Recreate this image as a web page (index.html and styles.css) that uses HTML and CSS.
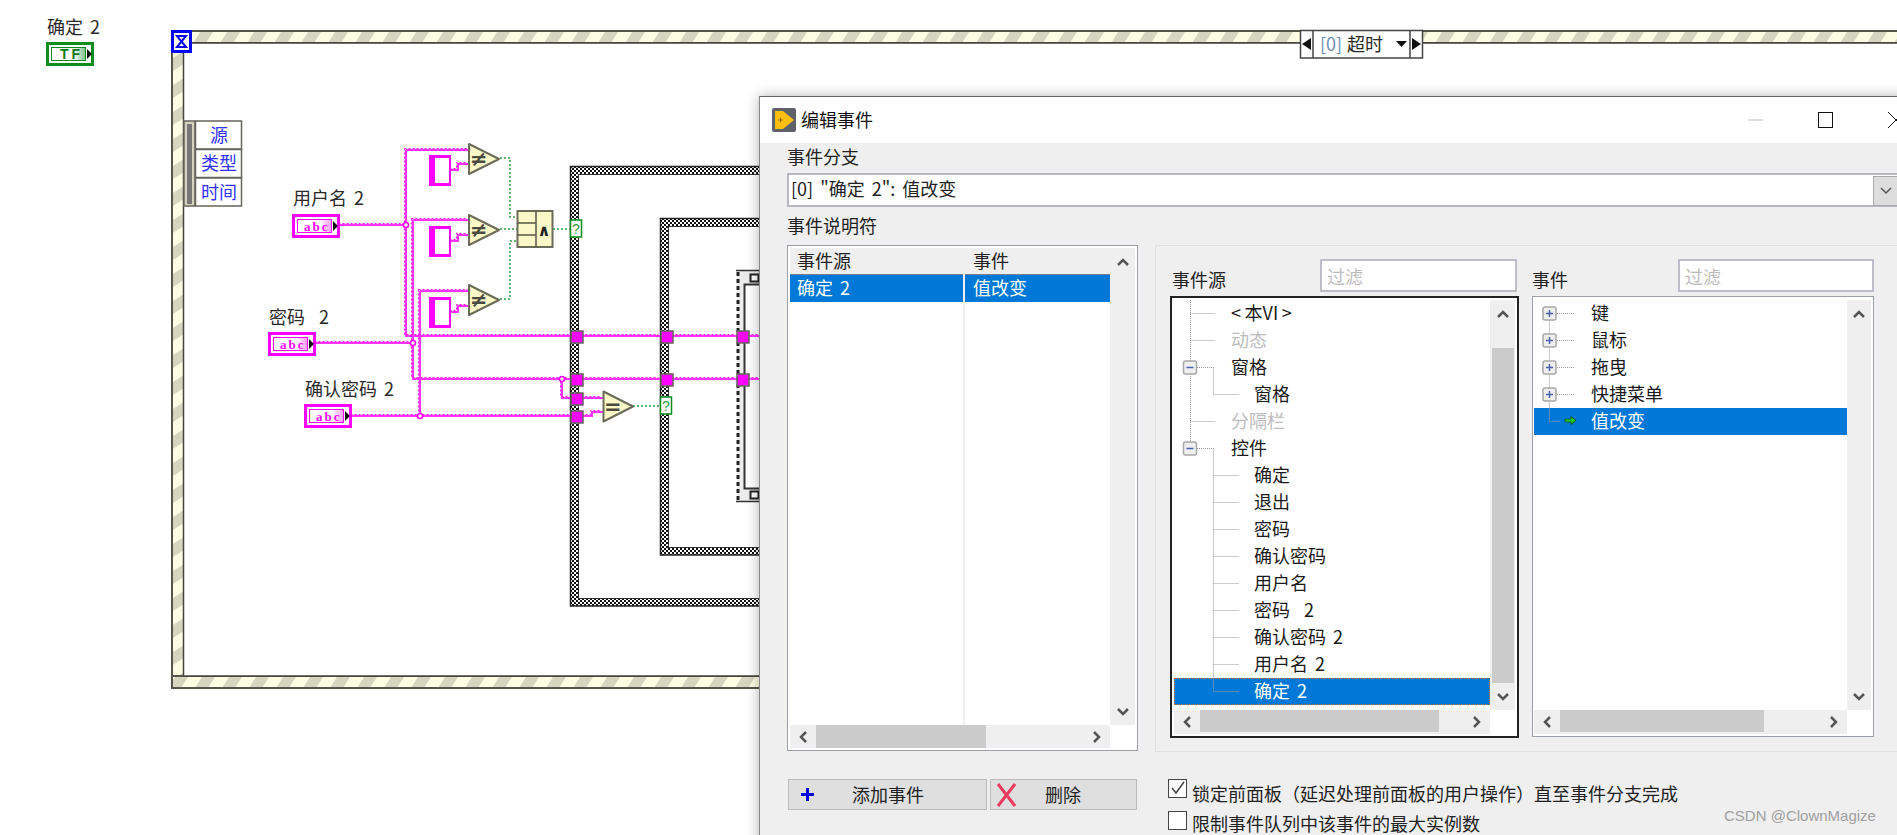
FILE: index.html
```html
<!DOCTYPE html>
<html lang="zh-CN">
<head>
<meta charset="utf-8">
<title>编辑事件</title>
<link rel="stylesheet" href="styles.css">
</head>
<body>
<div class="screen">
  <svg class="diagram" width="1897" height="835" viewBox="0 0 1897 835" xmlns="http://www.w3.org/2000/svg">
    <defs>
      <pattern id="stripeH" width="27" height="27" patternUnits="userSpaceOnUse" patternTransform="translate(4 0) skewX(-32)">
        <rect class="st-bg" width="27" height="27"/><rect class="st-fg" width="13" height="27"/>
      </pattern>
      <pattern id="stripeV" width="27" height="27" patternUnits="userSpaceOnUse" patternTransform="translate(0 4) skewY(-32)">
        <rect class="st-bg" width="27" height="27"/><rect class="st-fg" width="27" height="13"/>
      </pattern>
      <pattern id="checker" width="4" height="4" patternUnits="userSpaceOnUse">
        <rect class="ck-bg" width="4" height="4"/><rect class="ck-fg" width="2" height="2"/><rect class="ck-fg" x="2" y="2" width="2" height="2"/>
      </pattern>
      <linearGradient id="fadeP" x1="0" x2="1" y1="0" y2="0"><stop offset="0" stop-color="#fff"/><stop offset="1" stop-color="#ff9cff"/></linearGradient>
      <linearGradient id="fadeG" x1="0" x2="1" y1="0" y2="0"><stop offset="0" stop-color="#fff"/><stop offset="1" stop-color="#7fc08a"/></linearGradient>
      <g id="strc"><rect class="mag" width="22" height="31"/><rect class="wht" x="6" y="3" width="14" height="25"/></g>
      <g id="neq">
        <polygon class="prim" points="1,1 31,16 1,31"/>
        <text class="prim-sign" x="2" y="23">≠</text>
      </g>
      <g id="strterm">
        <rect class="mag" width="48" height="24"/>
        <rect class="wht" x="3" y="3" width="42" height="18"/>
        <rect class="term-line-p" x="5.5" y="5.5" width="34" height="13"/>
        <rect class="fade-p" x="28" y="6" width="11" height="12"/>
        <text class="term-abc" x="12" y="16.500">abc</text>
        <polygon class="blk" points="41,7 46,12 41,17"/>
      </g>
      <g id="wires">
        <path d="M340 225H406M406 150V336H570M406 150H469M413 220V379H570M413 220H469M316 343H413M420 291V416M420 291H469M352 416H570M562 379V398H570"/>
        <path d="M451 170H458V164H469M451 241H458V235H469M451 312H458V306H469"/>
        <path d="M583 336H660M673 336H737M749 336H770M583 379H660M673 379H737M749 379H770"/>
        <path d="M583 398H603M583 416H592V412H603"/>
      </g>
    </defs>

    <!-- 事件结构外框 -->
    <rect class="band" x="172" y="31" width="1740" height="12" fill="url(#stripeH)"/>
    <rect class="band" x="172" y="31" width="12" height="657" fill="url(#stripeV)"/>
    <rect class="band" x="172" y="676" width="1000" height="12" fill="url(#stripeH)"/>
    <rect class="frame-inner" x="183.500" y="43" width="1760" height="633"/>

    <rect class="icon-blue" x="172.5" y="31.5" width="18" height="20"/>
    <polygon class="icon-glass" points="177,36 186,36 181.5,41.5 186,47 177,47 181.5,41.5"/>

    <!-- 事件数据节点 -->
    <rect class="node-strip" x="184" y="121" width="11" height="85"/>
    <rect class="node-grip" x="187" y="124" width="5" height="80"/>
    <rect class="node-cell" x="195.5" y="121" width="46" height="28"/>
    <rect class="node-cell" x="195.5" y="149.5" width="46" height="28"/>
    <rect class="node-cell" x="195.5" y="178" width="46" height="28"/>
    <text class="node-text" x="219" y="141.5">源</text>
    <text class="node-text" x="219" y="170">类型</text>
    <text class="node-text" x="219" y="198.5">时间</text>

    <!-- 条件结构 -->
    <rect class="ck-outer" x="570.5" y="166.5" width="400" height="439.5" fill="url(#checker)"/>
    <rect class="ck-inner" x="578.5" y="174.5" width="400" height="424"/>
    <rect class="ck-outer" x="660.5" y="218.5" width="400" height="336.5" fill="url(#checker)"/>
    <rect class="ck-inner" x="668.5" y="226.5" width="400" height="321"/>
    <rect class="seq-fill" x="737" y="270" width="100" height="232"/>
    <path class="seq-edge" d="M736 270.500H800M736 501.500H800"/>
    <path class="seq-dash" d="M738 272V500"/>
    <rect class="seq-inner" x="744.5" y="284.5" width="100" height="204"/>
    <rect class="seq-sq" x="750.5" y="274.5" width="8" height="7"/>
    <rect class="seq-sq" x="750.5" y="491.5" width="8" height="7"/>

    <!-- 连线 -->
    <use href="#wires" class="wire-base"/>
    <use href="#wires" class="wire-top"/>
    <path class="bool" d="M500 158H510V217H517M500 229H517M500 299H510V241H517M553 229H570M633 406H660"/>
    <circle class="junction" cx="406" cy="225" r="2.5"/>
    <circle class="junction" cx="413" cy="343" r="2.5"/>
    <circle class="junction" cx="420" cy="416" r="2.5"/>
    <circle class="junction" cx="562" cy="379" r="2.5"/>

    <!-- 常量与比较 -->
    <use href="#strc" x="429" y="155"/>
    <use href="#strc" x="429" y="226"/>
    <use href="#strc" x="429" y="297"/>
    <use href="#neq" x="468" y="143"/>
    <use href="#neq" x="468" y="214"/>
    <use href="#neq" x="468" y="284"/>
    <polygon class="prim" points="603.5,391.5 633,406.5 603.5,421.5"/>
    <text class="prim-sign" x="604" y="414">=</text>

    <rect class="prim-box" x="517.5" y="211" width="35" height="36"/>
    <path class="prim-lines" d="M536 211V247M517.5 223H536M517.5 235H536"/>
    <text class="prim-and" x="544" y="236">∧</text>

    <!-- 隧道 -->
    <rect class="tunnel" x="571" y="331" width="12" height="12"/>
    <rect class="tunnel" x="661" y="331" width="12" height="12"/>
    <rect class="tunnel" x="737" y="331" width="12" height="12"/>
    <rect class="tunnel" x="571" y="374" width="12" height="12"/>
    <rect class="tunnel" x="661" y="374" width="12" height="12"/>
    <rect class="tunnel" x="737" y="374" width="12" height="12"/>
    <rect class="tunnel" x="571" y="393" width="12" height="12"/>
    <rect class="tunnel" x="571" y="411" width="12" height="12"/>

    <rect class="selector" x="570.5" y="220" width="11" height="17"/>
    <text class="selector-q" x="576" y="234">?</text>
    <rect class="selector" x="660.5" y="397" width="11" height="17"/>
    <text class="selector-q" x="666" y="411">?</text>

    <!-- 接线端 -->
    <use href="#strterm" x="292" y="214"/>
    <use href="#strterm" x="268" y="332"/>
    <use href="#strterm" x="304" y="404"/>
    <g transform="translate(46 42)">
      <rect class="grn" width="48" height="24"/>
      <rect class="wht" x="3" y="3" width="42" height="18"/>
      <rect class="term-line-g" x="5.5" y="5.5" width="34" height="13"/>
      <rect class="fade-g" x="28" y="6" width="11" height="12"/>
      <text class="term-tf" x="14" y="17">TF</text>
      <polygon class="blk" points="41,7 46,12 41,17"/>
    </g>

    <!-- 标签 -->
    <text class="vi-label" x="47" y="34">确定 2</text>
    <text class="vi-label" x="293" y="205">用户名 2</text>
    <text class="vi-label" x="269" y="324">密码  2</text>
    <text class="vi-label" x="305" y="396">确认密码 2</text>

    <!-- 分支选择器 -->
    <rect class="case-box" x="1300.5" y="30.5" width="122" height="27.5"/>
    <path class="case-lines" d="M1313 30.5V58M1410 30.5V58"/>
    <polygon class="blk" points="1311,38 1311,50 1302,44"/>
    <polygon class="blk" points="1412,38 1412,50 1421,44"/>
    <polygon class="blk" points="1396,41 1407,41 1401.5,47"/>
    <text class="case-idx" x="1320" y="51">[0]</text>
    <text class="vi-label" x="1347" y="51">超时</text>
  </svg>

  <section class="dialog">
    <header class="titlebar">
      <svg class="app-icon" width="24" height="24" viewBox="0 0 24 24">
        <rect class="app-bg" width="24" height="24" rx="2"/>
        <polygon class="app-play" points="3,3 11,3 22,12 11,21 3,21"/>
        <path class="app-plus" d="M6 12H11M8.500 9.500V14.500"/>
      </svg>
      <h1 class="title">编辑事件</h1>
      <div class="win-controls">
        <svg class="wc" width="15" height="16" viewBox="0 0 15 16"><path class="wc-min" d="M0 8H15"/></svg>
        <svg class="wc" width="15" height="16" viewBox="0 0 15 16"><rect class="wc-max" x=".5" y=".5" width="14" height="15"/></svg>
        <svg class="wc" width="17" height="16" viewBox="0 0 17 16"><path class="wc-close" d="M0 0L16 16M16 0L0 16"/></svg>
      </div>
    </header>

    <div class="body">
      <div class="label">事件分支</div>
      <div class="combo">
        <span class="combo-text">[0] "确定 2": 值改变</span>
        <span class="combo-btn"><svg width="12" height="8" viewBox="0 0 12 8"><path class="chev-thin" d="M1 1L6 6L11 1"/></svg></span>
      </div>
      <div class="label label-second">事件说明符</div>

      <div class="main">
        <div class="list">
          <div class="list-body">
            <div class="col col-a">
              <div class="col-head">事件源</div>
              <div class="col-cell">确定 2</div>
            </div>
            <div class="col col-b">
              <div class="col-head">事件</div>
              <div class="col-cell">值改变</div>
            </div>
          </div>
          <div class="vbar vbar-list">
            <span class="arrow-up"><svg width="12" height="8" viewBox="0 0 12 8"><path class="chev" d="M1 7L6 2L11 7"/></svg></span>
            <span class="arrow-down"><svg width="12" height="8" viewBox="0 0 12 8"><path class="chev" d="M1 1L6 6L11 1"/></svg></span>
          </div>
          <div class="hbar">
            <span class="arrow-h"><svg width="8" height="12" viewBox="0 0 8 12"><path class="chev" d="M7 1L2 6L7 11"/></svg></span>
            <span class="thumb thumb-list"></span>
            <span class="arrow-h arrow-end"><svg width="8" height="12" viewBox="0 0 8 12"><path class="chev" d="M1 1L6 6L1 11"/></svg></span>
          </div>
        </div>

        <div class="group">
          <div class="pane pane-src">
            <div class="pane-head">
              <span class="pane-label">事件源</span>
              <span class="filter filter-src">过滤</span>
            </div>
            <div class="tree tree-focus">
              <div class="tree-body">
                <div class="row l1">&lt;&#8201;本VI&#8201;&gt;</div>
                <div class="row l1 dim">动态</div>
                <div class="row l1">窗格</div>
                <div class="row l2">窗格</div>
                <div class="row l1 dim">分隔栏</div>
                <div class="row l1">控件</div>
                <div class="row l2">确定</div>
                <div class="row l2">退出</div>
                <div class="row l2">密码</div>
                <div class="row l2">确认密码</div>
                <div class="row l2">用户名</div>
                <div class="row l2">密码  2</div>
                <div class="row l2">确认密码 2</div>
                <div class="row l2">用户名 2</div>
                <div class="row l2 sel focus">确定 2</div>
                <svg class="tree-lines" width="316" height="410" viewBox="0 0 316 410">
                  <path class="dots" d="M16.500 0V148M16.500 13.500H41M16.500 40.500H41M23 67.500H41M16.500 121.500H41M23 148.500H41M39.500 67.500V94.500H65M39.500 148.500V391.500M39.500 175.500H65M39.500 202.500H65M39.500 229.500H65M39.500 256.500H65M39.500 283.500H65M39.500 310.500H65M39.500 337.500H65M39.500 364.500H65M39.500 391.500H65"/>
                  <rect class="exp" x="9.500" y="61" width="13" height="13" rx="2"/><path class="exp-sign" d="M12.500 67.500H19.500"/>
                  <rect class="exp" x="9.500" y="142" width="13" height="13" rx="2"/><path class="exp-sign" d="M12.500 148.500H19.500"/>
                </svg>
              </div>
              <div class="vbar">
                <span class="arrow-up arrow-up-tree"><svg width="12" height="8" viewBox="0 0 12 8"><path class="chev" d="M1 7L6 2L11 7"/></svg></span>
                <span class="vthumb"></span>
                <span class="arrow-down"><svg width="12" height="8" viewBox="0 0 12 8"><path class="chev" d="M1 1L6 6L11 1"/></svg></span>
              </div>
              <div class="hbar">
                <span class="arrow-h"><svg width="8" height="12" viewBox="0 0 8 12"><path class="chev" d="M7 1L2 6L7 11"/></svg></span>
                <span class="thumb thumb-src"></span>
                <span class="arrow-h arrow-end"><svg width="8" height="12" viewBox="0 0 8 12"><path class="chev" d="M1 1L6 6L1 11"/></svg></span>
              </div>
            </div>
          </div>

          <div class="pane pane-evt">
            <div class="pane-head">
              <span class="pane-label">事件</span>
              <span class="filter filter-evt">过滤</span>
            </div>
            <div class="tree tree-plain">
              <div class="tree-body">
                <div class="row l1">键</div>
                <div class="row l1">鼠标</div>
                <div class="row l1">拖曳</div>
                <div class="row l1">快捷菜单</div>
                <div class="row l1 sel">值改变</div>
                <svg class="tree-lines" width="290" height="150" viewBox="0 0 290 150">
                  <path class="dots" d="M15.500 13.500V121.500H26M23 13.500H41M23 40.500H41M23 67.500H41M23 94.500H41"/>
                  <rect class="exp" x="9" y="7" width="13" height="13" rx="2"/><path class="exp-sign" d="M12 13.500H19M15.500 10V17"/>
                  <rect class="exp" x="9" y="34" width="13" height="13" rx="2"/><path class="exp-sign" d="M12 40.500H19M15.500 37V44"/>
                  <rect class="exp" x="9" y="61" width="13" height="13" rx="2"/><path class="exp-sign" d="M12 67.500H19M15.500 64V71"/>
                  <rect class="exp" x="9" y="88" width="13" height="13" rx="2"/><path class="exp-sign" d="M12 94.500H19M15.500 91V98"/>
                  <polygon class="green-arrow" points="31,119 37,119 37,116.500 42,120.500 37,124.500 37,122 31,122"/>
                </svg>
              </div>
              <div class="vbar">
                <span class="arrow-up"><svg width="12" height="8" viewBox="0 0 12 8"><path class="chev" d="M1 7L6 2L11 7"/></svg></span>
                <span class="arrow-down"><svg width="12" height="8" viewBox="0 0 12 8"><path class="chev" d="M1 1L6 6L11 1"/></svg></span>
              </div>
              <div class="hbar">
                <span class="arrow-h"><svg width="8" height="12" viewBox="0 0 8 12"><path class="chev" d="M7 1L2 6L7 11"/></svg></span>
                <span class="thumb thumb-evt"></span>
                <span class="arrow-h arrow-end"><svg width="8" height="12" viewBox="0 0 8 12"><path class="chev" d="M1 1L6 6L1 11"/></svg></span>
              </div>
            </div>
          </div>
        </div>
      </div>

      <div class="foot">
        <div class="buttons">
          <button class="btn btn-add" type="button">
            <svg width="13" height="13" viewBox="0 0 13 13"><path class="plus" d="M0 6.500H13M6.500 0V13"/></svg>
            <span>添加事件</span>
          </button>
          <button class="btn btn-del" type="button">
            <svg width="19" height="24" viewBox="0 0 19 24"><path class="cross" d="M1 1L18 23M18 1L1 23"/></svg>
            <span>删除</span>
          </button>
        </div>
        <div class="checks">
          <div class="check check-first">
            <span class="box"><svg width="17" height="17" viewBox="0 0 17 17"><path class="tick" d="M3 8L7 13L15 2"/></svg></span>
            <span class="check-text">锁定前面板（延迟处理前面板的用户操作）直至事件分支完成</span>
          </div>
          <div class="check">
            <span class="box"></span>
            <span class="check-text">限制事件队列中该事件的最大实例数</span>
          </div>
        </div>
      </div>
    </div>
  </section>

  <div class="watermark">CSDN @ClownMagize</div>
</div>
</body>
</html>
```

FILE: styles.css
```css
* { box-sizing: border-box; }
html, body { margin: 0; padding: 0; background: #fff; }
body { font-family: "Noto Sans CJK SC", "Noto Sans", sans-serif; font-size: 18px; color: #222; word-spacing: 3px; }
.screen { position: relative; width: 1897px; height: 835px; overflow: hidden; background: #fff; }

/* block diagram */
.diagram { position: absolute; left: 0; top: 0; display: block; }
.st-bg { fill: #fdfde4; }
.st-fg { fill: #d6d6c0; }
.ck-bg { fill: #fff; }
.ck-fg { fill: #111; }
.band { stroke: #55554a; stroke-width: 2; }
.frame-inner { fill: #fff; stroke: #44443c; stroke-width: 1.5; }
.wht { fill: #fff; }
.mag { fill: #ff00ff; }
.grn { fill: #0a8c1e; }
.blk { fill: #111; }
.icon-blue { fill: #fff; stroke: #0000f0; stroke-width: 3; }
.icon-glass { fill: #fff; stroke: #0000f0; stroke-width: 2; }
.node-strip { fill: #d4d4c0; stroke: #66665c; stroke-width: 1.5; }
.node-grip { fill: #777; }
.node-cell { fill: #fff; stroke: #66665c; stroke-width: 1.5; }
.node-text { font-size: 18px; fill: #3232ff; text-anchor: middle; }
.ck-outer { stroke: #222; stroke-width: 1.5; }
.ck-inner { fill: #fff; stroke: #333; stroke-width: 1; }
.seq-fill { fill: #ececec; }
.seq-edge { fill: none; stroke: #333; stroke-width: 1.5; }
.seq-dash { fill: none; stroke: #222; stroke-width: 3; stroke-dasharray: 4 3; }
.seq-inner { fill: #fff; stroke: #333; stroke-width: 2; }
.seq-sq { fill: #fff; stroke: #222; stroke-width: 2; }
.wire-base { fill: none; stroke: #ff33ff; stroke-width: 2; }
.wire-top { fill: none; stroke: #ff00ff; stroke-width: 1; stroke-dasharray: 2 2; transform: translate(-1.5px, -1.5px); }
.bool { fill: none; stroke: #2f9e44; stroke-width: 1.5; stroke-dasharray: 2 2; }
.junction { fill: #fff; stroke: #ff00ff; stroke-width: 1.5; }
.prim { fill: #fbf8c8; stroke: #6b6b5a; stroke-width: 2; stroke-linejoin: round; }
.prim-sign { font-family: "DejaVu Sans", sans-serif; font-size: 21px; font-weight: bold; fill: #4a4a40; }
.prim-box { fill: #fbf8c8; stroke: #6b6b5a; stroke-width: 2; }
.prim-lines { fill: none; stroke: #55554a; stroke-width: 1.5; }
.prim-and { font-family: "DejaVu Sans", sans-serif; font-size: 16px; font-weight: bold; fill: #222; text-anchor: middle; }
.tunnel { fill: #ff00ff; stroke: #66665c; stroke-width: 1.5; }
.selector { fill: #fff; stroke: #0a8c1e; stroke-width: 1.5; }
.selector-q { font-family: "Liberation Sans", sans-serif; font-size: 14px; fill: #2f9e44; text-anchor: middle; }
.term-line-p { fill: #fff; stroke: #ff00ff; stroke-width: 1; }
.term-line-g { fill: #fff; stroke: #0a8c1e; stroke-width: 1; }
.fade-p { fill: url(#fadeP); }
.fade-g { fill: url(#fadeG); }
.term-abc { font-family: "Liberation Serif", serif; font-size: 13px; font-weight: bold; letter-spacing: 2px; fill: #ff00ff; }
.term-tf { font-family: "Liberation Sans", sans-serif; font-size: 14px; font-weight: bold; letter-spacing: 3px; fill: #0a7a1a; }
.vi-label { font-size: 18px; fill: #2a2a2a; white-space: pre; }
.case-box { fill: #fff; stroke: #444; stroke-width: 1.5; }
.case-lines { fill: none; stroke: #444; stroke-width: 1.5; }
.case-idx { font-size: 18px; fill: #6f8fb5; }

/* dialog window */
.dialog {
  position: absolute; left: 759px; top: 96px; width: 1161px; height: 760px;
  background: #efefef; border-top: 1px solid #666; border-left: 1px solid #888;
  box-shadow: 0 0 12px rgba(0, 0, 0, .3);
}
.titlebar { display: flex; align-items: center; height: 46px; background: #fff; padding: 0 15px 0 12px; }
.app-icon { display: block; flex: none; }
.app-bg { fill: #5f6268; }
.app-play { fill: #fdc010; }
.app-plus { fill: none; stroke: #8a6a00; stroke-width: 1; }
.title { margin: 0 0 2px 5px; font-size: 18px; font-weight: 400; line-height: 24px; color: #111; }
.win-controls { display: flex; align-items: center; gap: 55px; margin-left: auto; }
.wc { display: block; margin-top: -1px; }
.wc-min { stroke: #bbb; stroke-width: 1; }
.wc-max { fill: none; stroke: #111; stroke-width: 1; }
.wc-close { fill: none; stroke: #111; stroke-width: 1; }

.body { padding: 1px 23px 0 27px; }
.label { line-height: 24px; height: 24px; color: #222; }
.combo {
  display: flex; justify-content: space-between; align-items: stretch;
  height: 34px; margin-top: 5px; padding: 1px 0 0 2px;
  background: #fff; border: 2px solid #b8b8c2; border-right: 0;
}
.combo-text { line-height: 25px; white-space: pre; }
.combo-btn {
  display: flex; align-items: center; justify-content: center; width: 24px;
  background: #ddd; border: 1px solid #aaa; border-right: 0; margin-bottom: -1px;
}
.combo-btn svg { display: block; }
.chev-thin { fill: none; stroke: #555; stroke-width: 1.5; }
.label-second { margin-top: 6px; }

.main { display: flex; gap: 17px; margin-top: 8px; align-items: flex-start; }

/* shared list / scrollbars */
.list {
  display: grid; grid-template-columns: 320px 25px; grid-template-rows: 477px 23px;
  flex: none; width: 351px; height: 506px; padding: 2px;
  background: #fff; border: 1px solid #9a9fa8;
}
.list-body { display: flex; background: #fff; }
.col { display: flex; flex-direction: column; }
.col-a { width: 175px; padding: 0; border-right: 2px solid #efefef; }
.col-b { flex: 1; }
.col-head { height: 26px; line-height: 25px; padding-left: 7px; background: #efefef; color: #222; }
.col-b .col-head { padding-left: 8px; }
.col-cell { height: 28px; line-height: 25px; padding-left: 7px; background: #0078d7; color: #fff; border-top: 1px solid #6d7f90; white-space: pre; }
.col-b .col-cell { padding-left: 8px; }

.vbar { display: flex; flex-direction: column; align-items: center; background: #efefef; }
.arrow-up { display: flex; flex: none; height: 28px; padding-top: 10px; justify-content: center; }
.arrow-up-tree { height: 48px; }
.arrow-down { display: flex; flex: none; height: 26px; align-items: center; justify-content: center; margin-top: auto; }
.vthumb { flex: none; width: 22px; height: 335px; background: #cbcbcb; }
.hbar { display: flex; align-items: stretch; background: #efefef; grid-column: 1; }
.arrow-h { display: flex; flex: none; width: 26px; align-items: center; justify-content: center; }
.arrow-end { margin-left: auto; }
.thumb { flex: none; background: #cbcbcb; }
.thumb-list { width: 170px; }
.thumb-src { width: 239px; margin-bottom: 2px; }
.thumb-evt { width: 204px; margin-bottom: 2px; }
.chev { fill: none; stroke: #555; stroke-width: 2.500; }
.vbar svg, .hbar svg { display: block; }

/* event source / event group */
.group {
  display: flex; gap: 13px; flex: 1; height: 507px; padding: 13px 0 0 14px;
  border: 1px solid #e0e0e0; border-right: 0;
  margin-right: -23px;
}
.pane { display: flex; flex-direction: column; gap: 4px; flex: none; }
.pane-src { width: 349px; }
.pane-evt { width: 342px; }
.pane-head { display: flex; justify-content: space-between; height: 33px; }
.pane-label { align-self: flex-end; padding-left: 2px; margin-bottom: 1px; line-height: 24px; color: #222; }
.pane-evt .pane-label { padding-left: 0; }
.filter {
  height: 33px; padding-left: 5px; line-height: 30px; color: #bcbcbc;
  background: #fff; border: 2px solid #bdbdc8;
}
.filter-src { width: 197px; margin-right: 2px; }
.filter-evt { width: 196px; }

.tree { display: grid; grid-template-rows: 410px 24px; background: #fff; }
.tree-focus { height: 442px; grid-template-columns: 316px 25px; border: 2px solid #222; padding: 2px; }
.tree-plain { height: 441px; grid-template-columns: 313px 24px; border: 1px solid #9a9fa8; padding: 3px 2px 2px 1px; }
.tree-body { position: relative; background: #fff; }
.row { height: 27px; line-height: 25px; color: #1a1a1a; white-space: pre; }
.l1 { padding-left: 57px; }
.l2 { padding-left: 80px; }
.dim { color: #bdbdbd; }
.sel { background: #0078d7; color: #fff; }
.focus { outline: 1px dotted #c8741a; outline-offset: -1px; }
.tree-lines { position: absolute; left: 0; top: 0; display: block; pointer-events: none; }
.dots { fill: none; stroke: #999; stroke-width: 1; stroke-dasharray: 1 1; }
.exp { fill: #efefef; stroke: #a8a8a8; stroke-width: 1.500; }
.exp-sign { fill: none; stroke: #4a62a8; stroke-width: 1.500; }
.green-arrow { fill: #1fc41f; stroke: #114411; stroke-width: .7; }

/* footer */
.foot { display: flex; margin-top: 27px; }
.buttons { display: flex; gap: 3px; flex: none; margin-left: 1px; }
.btn {
  display: flex; align-items: center; height: 31px; margin: 0; padding: 0 0 2px;
  font: inherit; color: #222; background: #dfdfdf; border: 1px solid #bbb; line-height: 24px;
}
.btn svg { display: block; flex: none; margin-top: 2px; }
.btn-add { width: 199px; padding-left: 12px; gap: 38px; }
.btn-del { width: 147px; padding-left: 6px; gap: 29px; }
.plus { fill: none; stroke: #0000e0; stroke-width: 3; }
.cross { fill: none; stroke: #ea3a5e; stroke-width: 3; }
.checks { display: flex; flex-direction: column; gap: 8px; margin-left: 31px; }
.check { display: flex; gap: 5px; height: 24px; }
.check-text { line-height: 24px; color: #222; }
.check-first .check-text { margin-top: 2px; }
.box { display: block; flex: none; width: 19px; height: 19px; background: #fff; border: 1px solid #444; }
.box svg { display: block; }
.tick { fill: none; stroke: #444; stroke-width: 1.500; }

.watermark {
  position: absolute; left: 1724px; top: 806px;
  font-family: "Liberation Sans", sans-serif; font-size: 15px; line-height: 20px; color: #a0a0a0; word-spacing: 0;
}
```
